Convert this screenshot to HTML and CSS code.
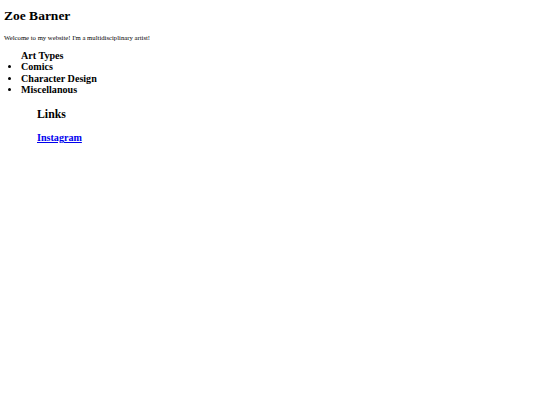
FILE: index.html
```html
<!DOCTYPE html>
<html>
<head>
<meta charset="utf-8">
<link rel="stylesheet" href="styles.css">
</head>
<body>
<h1 class="title">Zoe Barner</h1>
<p class="intro">Welcome to my website! I'm a multidisciplinary artist!</p>
<ul class="types">
  <li class="types-head">Art Types</li>
  <li>Comics</li>
  <li>Character Design</li>
  <li>Miscellanous</li>
</ul>
<div class="links">
  <h2 class="links-head">Links</h2>
  <p class="link-row"><a class="link" href="#">Instagram</a></p>
</div>
</body>
</html>
```

FILE: styles.css
```css
body {
  margin: 0;
  padding: 4px;
  font-family: "Liberation Serif", "Times New Roman", serif;
  color: #000;
  background: #fff;
}
.title {
  font-size: 13.5px;
  margin: 1px 0 0 0;
  line-height: 22px;
}
.intro {
  font-size: 6.7px;
  margin: 5.5px 0 0 0;
  line-height: 9px;
}
.types {
  margin: 8px 0 0 0;
  padding-left: 17px;
  font-weight: bold;
  font-size: 10.1px;
  line-height: 11.5px;
}
.types-head {
  list-style: none;
}
.links {
  margin: 10px 0 0 33px;
}
.links-head {
  font-size: 11.8px;
  margin: 0;
  line-height: 16px;
}
.link-row {
  margin: 10.5px 0 0 0;
  font-size: 10.1px;
  line-height: 12px;
}
.link {
  font-weight: bold;
  color: #0000ee;
}
```
